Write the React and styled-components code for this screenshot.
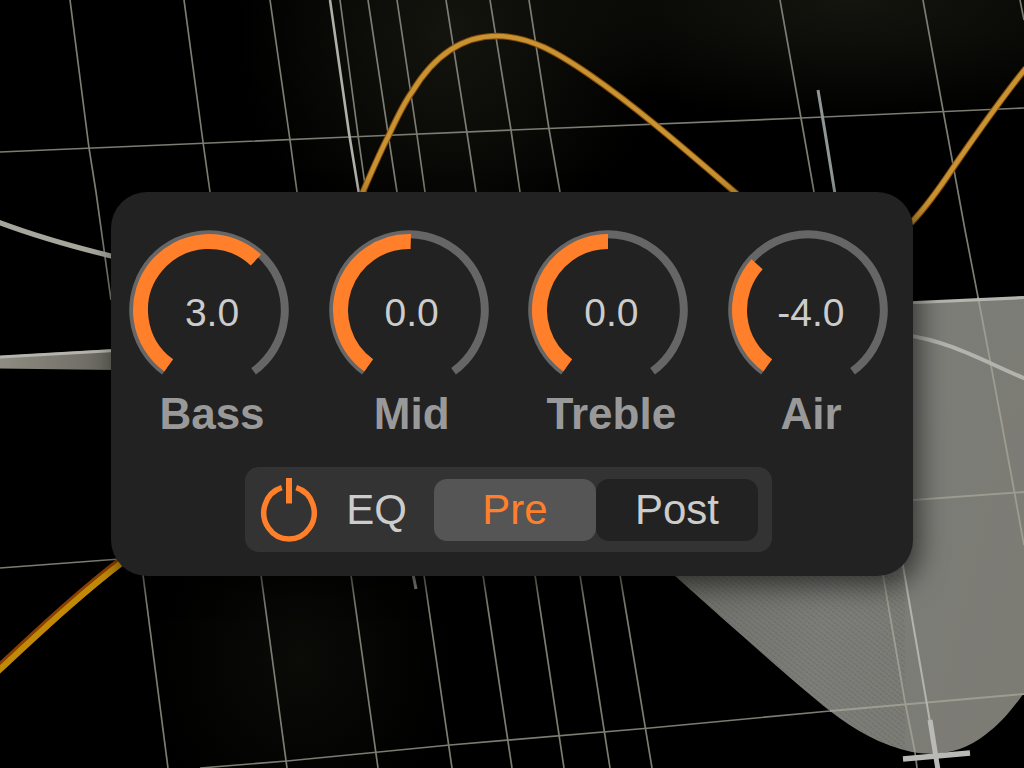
import React, { useState } from "react";
import styled, { createGlobalStyle } from "styled-components";

const GlobalStyle = createGlobalStyle`
  *, *::before, *::after { box-sizing: border-box; }
  body {
    margin: 0;
    background: #000;
    font-family: "Liberation Sans", Arial, Helvetica, sans-serif;
  }
`;

const Stage = styled.main`
  position: relative;
  min-height: 100vh;
  display: grid;
  place-items: center;
  padding: 24px;
  overflow: hidden;
`;

const Backdrop = styled.svg`
  position: absolute;
  inset: 0;
  width: 100%;
  height: 100%;
`;

const Panel = styled.section`
  position: relative;
  width: 100%;
  max-width: 802px;
  display: flex;
  flex-direction: column;
  align-items: center;
  gap: 29px;
  padding: 38px 25px 24px 18px;
  border-radius: 36px;
  background: #222;
  box-shadow: 6px 10px 28px rgba(0, 0, 0, 0.6);
`;

const KnobRow = styled.div`
  width: 100%;
  display: flex;
  flex-wrap: wrap;
  justify-content: space-between;
`;

const KnobCell = styled.div`
  width: 160px;
`;

const Dial = styled.div`
  position: relative;
  display: grid;
  height: 160px;

  > * {
    grid-area: 1 / 1;
  }
`;

const Arc = styled.path`
  fill: none;
  stroke: ${(p) => (p.$active ? "#ff7f2a" : "#666")};
  stroke-width: ${(p) => (p.$active ? 15 : 8)};
`;

const Value = styled.output`
  align-self: center;
  padding: 6px 0 0 6px;
  text-align: center;
  font-size: 39px;
  line-height: 44px;
  color: #ccc;
`;

const Slider = styled.input`
  position: absolute;
  inset: 0;
  width: 100%;
  height: 100%;
  margin: 0;
  opacity: 0;
  cursor: pointer;
`;

const KnobLabel = styled.label`
  display: block;
  padding-left: 6px;
  text-align: center;
  font-size: 44px;
  font-weight: 700;
  line-height: 48px;
  color: #999;
`;

const EqBar = styled.div`
  display: flex;
  align-items: center;
  height: 85px;
  padding: 0 14px;
  border-radius: 14px;
  background: #333;
`;

const PowerButton = styled.button`
  display: block;
  width: 60px;
  height: 68px;
  padding: 0;
  border: 0;
  background: none;
  color: ${(p) => (p.$on ? "#ff7f2a" : "#999")};
  cursor: pointer;
`;

const EqTitle = styled.span`
  width: 115px;
  text-align: center;
  font-size: 42px;
  line-height: 48px;
  color: #ccc;
`;

const Segment = styled.div`
  display: flex;
`;

const SegmentButton = styled.button`
  width: 162px;
  height: 62px;
  padding: 0;
  border: 0;
  border-radius: 13px;
  background: ${(p) => (p.$selected ? "#555" : "#222")};
  color: ${(p) => (p.$selected ? "#ff7f2a" : "#ccc")};
  font-family: inherit;
  font-size: 42px;
  line-height: 48px;
  cursor: pointer;
`;

const SWEEP = 144;

/* Arc path around the dial centre; angles are in degrees clockwise from 12 o'clock. */
function arcPath(radius, from, to) {
  const point = (deg) => {
    const a = (deg * Math.PI) / 180;
    return `${80 + radius * Math.sin(a)} ${80 - radius * Math.cos(a)}`;
  };
  return `M${point(from)}A${radius} ${radius} 0 ${to - from > 180 ? 1 : 0} 1 ${point(to)}`;
}

const BANDS = [
  { name: "Bass", value: 3, range: 10, trim: 0 },
  { name: "Mid", value: 0, range: 12, trim: 1.5 },
  { name: "Treble", value: 0, range: 12, trim: 0 },
  { name: "Air", value: -4, range: 12, trim: 0 },
];

function Knob({ name, value: initial, range, trim }) {
  const [value, setValue] = useState(initial);
  const id = `band-${name.toLowerCase()}`;
  const angle = (value / range) * SWEEP + trim;
  return (
    <KnobCell>
      <Dial>
        <svg width="160" height="160" viewBox="0 0 160 160" aria-hidden="true">
          <Arc d={arcPath(75.8, -SWEEP, SWEEP)} />
          <Arc $active d={arcPath(68.5, -SWEEP, angle)} />
        </svg>
        <Value htmlFor={id}>{value.toFixed(1)}</Value>
        <Slider
          id={id}
          type="range"
          min={-range}
          max={range}
          step="0.5"
          value={value}
          onChange={(e) => setValue(Number(e.target.value))}
        />
      </Dial>
      <KnobLabel htmlFor={id}>{name}</KnobLabel>
    </KnobCell>
  );
}

const GRID_LINES = [
  "M70 0L89 148L96 192L111 300",
  "M184 0L203 142L210 192",
  "M270 0L290 140L297 192",
  "M340 0L358 135L366 192",
  "M368 0L388 133L397 192",
  "M397 0L417 135L425 192",
  "M446 0L467 133L476 192",
  "M490 0L511 130L520 192",
  "M529 0L549 129L560 192",
  "M780 0L801 118L814 192",
  "M923 0L943 110L965 230L978 297",
  "M1020 0L1024 20",
  "M0 152L349 137L512 130L801 118L1024 108",
  "M0 568L120 559",
  "M143 575L168 768",
  "M261 575L287 768",
  "M351 575L378 768",
  "M424 575L452 768",
  "M483 575L512 768",
  "M535 575L564 768",
  "M580 575L610 768",
  "M620 575L652 768",
  "M200 768L287 761L450 745L650 728L830 711",
  "M915 752L917 768",
];

const AREA_LINES = [
  "M978 297L990 360L1014 490L1024 545",
  "M913 500L1024 492",
  "M883 575L905 702L915 752",
  "M830 711L1024 694",
];

const CURVES = [
  "M362 194C375 164 381 150 388 137C399 113 404 103 412 92C432 59 460 36 497 36C530 36 558 53 590 75C635 106 680 145 737 194",
  "M911 223C930 203 943 183 955 165C980 129 1000 100 1026 68",
];

const AREA =
  "M913 303L1024 297L1024 693C1011 711 1000 724 985 735C965 751 940 757 912 752C880 745 855 730 830 711C795 683 740 634 674 575L674 400Z";

function GraphBackdrop() {
  return (
    <Backdrop viewBox="0 0 1024 768" preserveAspectRatio="xMidYMid slice" fill="none" aria-hidden="true">
      <defs>
        <radialGradient id="glow">
          <stop offset="0" stopColor="#15150f" />
          <stop offset="1" stopColor="#15150f" stopOpacity="0" />
        </radialGradient>
        <linearGradient id="areaFill" gradientUnits="userSpaceOnUse" x1="700" y1="560" x2="1024" y2="640">
          <stop offset="0" stopColor="#72726d" />
          <stop offset="0.4" stopColor="#7d7e79" />
          <stop offset="1" stopColor="#7c7b74" />
        </linearGradient>
        <linearGradient id="wedgeFill" x1="0" x2="1">
          <stop offset="0" stopColor="#8f8d83" />
          <stop offset="1" stopColor="#66645c" />
        </linearGradient>
        <pattern id="weave" width="4" height="4" patternUnits="userSpaceOnUse" patternTransform="rotate(38)">
          <path d="M0 1H3" stroke="#000" strokeWidth="1" opacity="0.14" />
        </pattern>
      </defs>

      <ellipse cx="450" cy="30" rx="210" ry="230" fill="url(#glow)" />
      <ellipse cx="850" cy="0" rx="360" ry="120" fill="url(#glow)" />
      <ellipse cx="300" cy="660" rx="150" ry="170" fill="url(#glow)" opacity="0.5" />

      {GRID_LINES.map((d) => (
        <path key={d} d={d} stroke="#7c7c72" strokeWidth="1.7" />
      ))}

      <path d={AREA} fill="url(#areaFill)" />
      <path d="M674 575H905V752C880 745 855 730 830 711C795 683 740 634 674 575Z" fill="url(#weave)" />
      {AREA_LINES.map((d) => (
        <path key={d} d={d} stroke="#9d9c90" strokeWidth="1.8" />
      ))}
      <path d="M902 560L930 722" stroke="#b4b4ac" strokeWidth="2" />
      <path d="M905 303L1024 297.500" stroke="#b5b5af" strokeWidth="3.200" />
      <path d="M905 335C950 341 985 362 1026 379" stroke="#b3b3ad" strokeWidth="4" />

      <path d="M0 356L115 349V370L0 368.500Z" fill="url(#wedgeFill)" />
      <path d="M0 357L115 350.500" stroke="#b4b4ac" strokeWidth="3" />
      <path d="M-2 222C35 236 70 246 115 257" stroke="#a6a69d" strokeWidth="5" />

      <path d="M330 0L349 133L359 194" stroke="#b0b0a8" strokeWidth="2.600" />
      <path d="M818 90L825 132L835 194" stroke="#8f9696" strokeWidth="3" />
      <path d="M413 574L416 589" stroke="#8a8a84" strokeWidth="3" />

      {CURVES.map((d) => (
        <g key={d}>
          <path d={d} stroke="#8a4d08" strokeWidth="6.500" />
          <path d={d} stroke="#c79333" strokeWidth="4.500" />
        </g>
      ))}
      <path d="M-4 671C35 635 78 594 124 559" stroke="#8a3e00" strokeWidth="9" />
      <path d="M-4 673C35 637 78 596 124 561" stroke="#c08a08" strokeWidth="6" />

      <path d="M930 720L938 770" stroke="#b9bab5" strokeWidth="5" />
      <path d="M903 759L970 753" stroke="#b9bab5" strokeWidth="5.500" />
    </Backdrop>
  );
}

export default function App() {
  const [enabled, setEnabled] = useState(true);
  const [position, setPosition] = useState("Pre");

  return (
    <>
      <GlobalStyle />
      <Stage>
        <GraphBackdrop />
        <Panel aria-label="Equalizer">
          <KnobRow>
            {BANDS.map((band) => (
              <Knob key={band.name} {...band} />
            ))}
          </KnobRow>
          <EqBar>
            <PowerButton
              type="button"
              aria-label="Power"
              aria-pressed={enabled}
              $on={enabled}
              onClick={() => setEnabled(!enabled)}
            >
              <svg width="60" height="68" viewBox="0 0 60 68" fill="none" stroke="currentColor" aria-hidden="true">
                <path d="M22.800 11.700A25.200 26.200 0 1 0 37.200 11.700" strokeWidth="5.500" />
                <path d="M30 2V27.500" strokeWidth="6" />
              </svg>
            </PowerButton>
            <EqTitle>EQ</EqTitle>
            <Segment role="group" aria-label="EQ position">
              {["Pre", "Post"].map((name) => (
                <SegmentButton
                  key={name}
                  type="button"
                  aria-pressed={position === name}
                  $selected={position === name}
                  onClick={() => setPosition(name)}
                >
                  {name}
                </SegmentButton>
              ))}
            </Segment>
          </EqBar>
        </Panel>
      </Stage>
    </>
  );
}
